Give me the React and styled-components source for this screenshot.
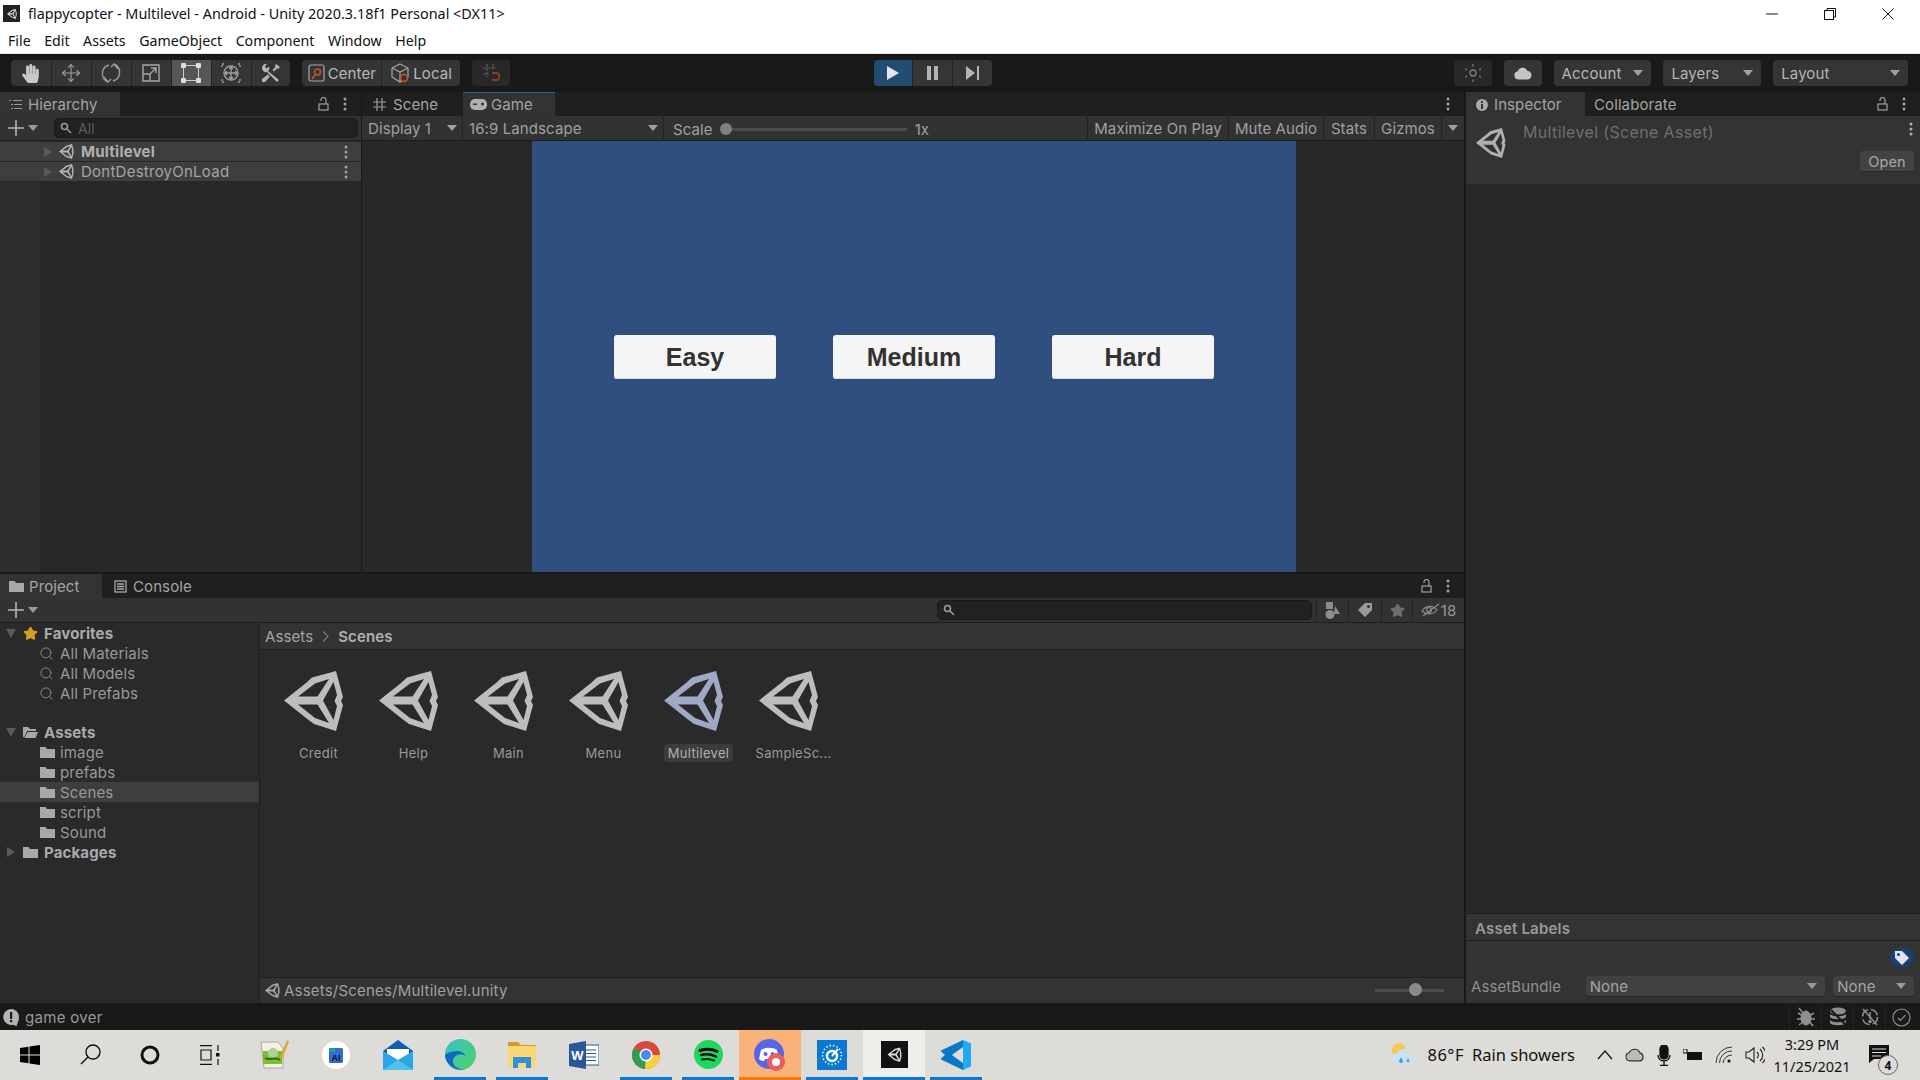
import styled, { createGlobalStyle } from "styled-components";
import { Search, Star, Move } from "lucide-react";
import { FaHandPaper } from "react-icons/fa";

const Global = createGlobalStyle`
html, body { margin: 0; padding: 0; background: #191919; overflow: hidden; }
* { box-sizing: border-box; }
`;

const Page = styled.div`
width: 1920px;
height: 1080px;
display: flex;
flex-direction: column;
font-family: Inter, "Liberation Sans", sans-serif;
font-size: 15px;
letter-spacing: 0.1px;
color: #a4a4a4;
overflow: hidden;
`;

/* window chrome */
const TitleBar = styled.div`
height: 27px;
background: #fff;
display: flex;
align-items: center;
padding-left: 3px;
font-family: "Noto Sans", sans-serif;
font-size: 14.4px;
letter-spacing: 0;
color: #111;
`;

const AppIcon = styled.div`
width: 17px;
height: 17px;
background: #222;
color: #ddd;
display: flex;
align-items: center;
justify-content: center;
margin-right: 8px;
`;

const WinButtons = styled.div`
margin-left: auto;
display: flex;
align-items: center;
padding-right: 26px;
gap: 46px;
`;

const MenuBar = styled.div`
height: 27px;
background: #fff;
border-bottom: 1px solid #e4e4e4;
display: flex;
align-items: center;
padding: 0 0 0 8px;
gap: 13.5px;
font-family: "Noto Sans", sans-serif;
font-size: 14.2px;
letter-spacing: 0;
color: #111;
`;

/* main toolbar */
const Toolbar = styled.div`
height: 38px;
background: #191919;
display: flex;
align-items: center;
padding: 0 12px 0 11px;
`;

const ToolGroup = styled.div`
display: flex;
height: 26px;
border-radius: 4px;
overflow: hidden;
margin-left: ${p => p.$gap || 0}px;
`;

const ToolBtn = styled.div`
width: ${p => p.$w || 40}px;
height: 26px;
background: ${p => (p.$on ? "#565656" : p.$play ? "#234c73" : p.$dim ? "#282828" : "#353535")};
border-left: ${p => (p.$first ? "none" : "1px solid #232323")};
color: ${p => (p.$dim ? "#777" : "#b8b8b8")};
display: flex;
align-items: center;
justify-content: center;
gap: 3px;
font-size: 15px;
`;

const ToolDrop = styled.div`
width: ${p => p.$w}px;
height: 26px;
margin-left: 12px;
border-radius: 4px;
background: #353535;
color: #b4b4b4;
display: flex;
align-items: center;
justify-content: space-between;
padding: 0 8px;
font-size: 15px;
`;

const Caret = styled.span`
display: inline-block;
width: 0;
height: 0;
border-left: 5px solid transparent;
border-right: 5px solid transparent;
border-top: 6px solid ${p => p.$c || "#a0a0a0"};
flex: none;
`;

const SideCaret = styled.span`
display: inline-block;
width: 0;
height: 0;
border-top: 5px solid transparent;
border-bottom: 5px solid transparent;
border-left: 8px solid #5a5a5a;
flex: none;
`;

const DownCaret = styled.span`
display: inline-block;
width: 0;
height: 0;
border-left: 5px solid transparent;
border-right: 5px solid transparent;
border-top: 9px solid #5a5a5a;
flex: none;
`;

/* editor layout */
const Editor = styled.div`
height: 911px;
display: flex;
gap: 2px;
background: #191919;
`;

const LeftCol = styled.div`
width: 1464px;
display: flex;
flex-direction: column;
gap: 2px;
`;

const TopRow = styled.div`
height: 480px;
display: flex;
gap: 1px;
`;

const Panel = styled.div`
display: flex;
flex-direction: column;
flex: ${p => (p.$w ? "none" : 1)};
width: ${p => (p.$w ? p.$w + "px" : "auto")};
min-width: 0;
background: #282828;
`;

const TabBar = styled.div`
height: 24px;
flex: none;
background: #1f1f1f;
display: flex;
align-items: stretch;
`;

const Tab = styled.div`
width: ${p => p.$w}px;
background: ${p => (p.$on ? "#333" : "transparent")};
border-top: 1px solid ${p => (p.$blue ? "#2c5d87" : "transparent")};
display: flex;
align-items: center;
gap: ${p => p.$gap || 6}px;
padding-left: ${p => p.$pad || 9}px;
font-size: 15px;
color: #a4a4a4;
`;

const TabTools = styled.div`
margin-left: auto;
display: flex;
align-items: center;
gap: 14px;
padding-right: 14px;
color: #a0a0a0;
`;

const SubBar = styled.div`
height: 25px;
flex: none;
background: #323232;
border-bottom: 1px solid #1d1d1d;
display: flex;
align-items: center;
`;

const AddBtn = styled.div`
width: 48px;
height: 100%;
display: flex;
align-items: center;
padding-left: 8px;
gap: 4px;
color: #b0b0b0;
`;

const SearchBox = styled.div`
height: 20px;
width: ${p => p.$w}px;
margin-left: ${p => p.$ml || 0}px;
background: #212121;
border: 1px solid #1a1a1a;
border-radius: 5px;
display: flex;
align-items: center;
gap: 6px;
padding-left: 5px;
font-size: 14px;
color: #5c5c5c;
`;

const HierarchyList = styled.div`
flex: 1;
padding-top: 1px;
background: linear-gradient(to right, #2e2e2e 40px, #282828 40px);
`;

const HierarchyRow = styled.div`
height: 20px;
background: #3e3e3e;
border-bottom: 1px solid #262626;
display: flex;
align-items: center;
padding: 0 13px 0 44px;
gap: 7px;
font-weight: ${p => (p.$bold ? 700 : 400)};
color: ${p => (p.$bold ? "#b0b0b0" : "#a4a4a4")};
font-size: 15px;
letter-spacing: 0.25px;
`;

const RowDots = styled.div`
margin-left: auto;
display: flex;
color: #a0a0a0;
`;

/* game view */
const GameTools = styled(SubBar)`
font-size: 15px;
color: #a0a0a0;
`;

const GameCell = styled.div`
width: ${p => p.$w}px;
height: 100%;
flex: ${p => (p.$grow ? 1 : "none")};
border-right: ${p => (p.$last ? "none" : "1px solid #232323")};
display: flex;
align-items: center;
justify-content: ${p => (p.$center ? "center" : "space-between")};
padding: ${p => (p.$center ? "0" : "0 5px 0 6px")};
`;

const ScaleCell = styled(GameCell)`
justify-content: flex-start;
padding: 2px 0 0 9px;
`;

const ScaleTrack = styled.div`
width: 181px;
height: 3px;
background: #4c4c4c;
margin: 0 8px 0 13px;
position: relative;
`;

const ScaleKnob = styled.div`
position: absolute;
left: -6px;
top: -5px;
width: 12px;
height: 12px;
border-radius: 50%;
background: #808080;
`;

const GameArea = styled.div`
flex: 1;
display: flex;
background: #282828;
padding-left: 170px;
`;

const GameScreen = styled.div`
width: 764px;
background: #2f4f7e;
display: flex;
align-items: center;
justify-content: center;
gap: 57px;
`;

const GameButton = styled.div`
width: 162px;
height: 44px;
padding-top: 2px;
background: #f5f5f5;
border-radius: 3px;
display: flex;
align-items: center;
justify-content: center;
font-family: "Liberation Sans", sans-serif;
font-weight: 700;
font-size: 25px;
letter-spacing: 0;
color: #323232;
box-shadow: inset 0 -1px 0 #d8d8d8;
`;

/* project */
const ProjectBody = styled.div`
flex: 1;
display: flex;
min-height: 0;
background: #2a2a2a;
`;

const Tree = styled.div`
width: 260px;
flex: none;
border-right: 1px solid #1e1e1e;
`;

const TreeRow = styled.div`
height: 20px;
display: flex;
align-items: center;
padding-left: ${p => p.$pad}px;
margin-top: ${p => p.$mt || 0}px;
gap: ${p => p.$gap || 6}px;
background: ${p => (p.$on ? "#3e3e3e" : "transparent")};
font-weight: ${p => (p.$bold ? 700 : 400)};
font-size: 15px;
letter-spacing: 0.15px;
color: ${p => (p.$bold ? "#aaa" : "#999")};
`;

const ArrowSlot = styled.span`
width: 11px;
display: flex;
justify-content: center;
flex: none;
`;

const TreeIcon = styled.span`
display: flex;
margin-left: 1px;
`;

const Browser = styled.div`
flex: 1;
display: flex;
flex-direction: column;
min-width: 0;
`;

const Crumbs = styled.div`
height: 27px;
flex: none;
background: #333;
border-bottom: 1px solid #1f1f1f;
display: flex;
align-items: center;
padding-left: 5px;
gap: 9px;
font-size: 15px;
`;

const CrumbBold = styled.span`
font-weight: 600;
color: #b0b0b0;
`;

const AssetGrid = styled.div`
flex: 1;
display: flex;
padding: 21px 0 0 11px;
align-items: flex-start;
`;

const AssetCell = styled.div`
width: 95px;
display: flex;
flex-direction: column;
align-items: center;
gap: 13px;
color: ${p => (p.$on ? "#9fa9c4" : "#bdbdbd")};
`;

const AssetIcon = styled.div`
display: flex;
padding-right: 10px;
`;

const AssetName = styled.div`
height: 18px;
padding: 0 4px;
border-radius: 4px;
background: ${p => (p.$on ? "#3c3c3c" : "transparent")};
color: ${p => (p.$on ? "#b0b0b0" : "#999")};
font-size: 13px;
letter-spacing: 0.3px;
display: flex;
align-items: center;
white-space: nowrap;
`;

const ProjectFooter = styled.div`
height: 26px;
flex: none;
background: #333;
border-top: 1px solid #1f1f1f;
display: flex;
align-items: center;
padding-left: 5px;
gap: 4px;
font-size: 15px;
letter-spacing: 0.2px;
color: #a0a0a0;
`;

const FooterSlider = styled.div`
margin-left: auto;
margin-right: 20px;
width: 69px;
height: 3px;
background: #4c4c4c;
position: relative;
`;

const FooterKnob = styled.div`
position: absolute;
left: 34px;
top: -6px;
width: 13px;
height: 13px;
border-radius: 50%;
background: #8a8a8a;
`;

const FilterBtn = styled.div`
width: ${p => p.$w || 32}px;
height: 100%;
margin-left: ${p => p.$ml || 0}px;
border-left: 1px solid #232323;
display: flex;
align-items: center;
justify-content: center;
gap: 1px;
color: #999;
font-size: 15px;
`;

/* inspector */
const InspectorHead = styled.div`
height: 68px;
flex: none;
background: #333;
padding: 5px 6px 0 10px;
display: grid;
grid-template-columns: 47px 1fr auto;
grid-template-rows: 23px 32px;
color: #b0b0b0;
`;

const InspectorLogo = styled.div`
grid-row: 1 / 3;
padding-top: 7px;
`;

const InspectorTitle = styled.div`
font-size: 16px;
color: #6f6f6f;
line-height: 22px;
letter-spacing: 0.35px;
`;

const OpenBtn = styled.div`
grid-column: 3;
grid-row: 2;
align-self: center;
justify-self: end;
width: 54px;
height: 21px;
margin-top: 3px;
border-radius: 3px;
background: #434343;
border-bottom: 1px solid #252525;
display: flex;
align-items: center;
justify-content: center;
font-size: 14.5px;
color: #a8a8a8;
`;

const HeadDots = styled.div`
justify-self: end;
padding-right: 1px;
`;

const InspectorFill = styled.div`
flex: 1;
`;

const LabelsHead = styled.div`
height: 28px;
flex: none;
background: #333;
border-top: 1px solid #1f1f1f;
border-bottom: 1px solid #1f1f1f;
display: flex;
align-items: center;
padding: 2px 0 0 9px;
font-weight: 600;
font-size: 15px;
letter-spacing: 0.2px;
color: #999;
`;

const LabelsBody = styled.div`
height: 62px;
flex: none;
background: #333;
display: flex;
flex-direction: column;
padding: 7px 6px 0 5px;
`;

const TagPill = styled.div`
align-self: flex-end;
width: 24px;
height: 19px;
border-radius: 10px;
background: #1d3f6e;
display: flex;
align-items: center;
justify-content: center;
`;

const BundleRow = styled.div`
margin-top: 9px;
display: flex;
align-items: center;
font-size: 15px;
color: #909090;
`;

const BundleLabel = styled.span`
width: 115px;
`;

const Select = styled.div`
height: 21px;
width: ${p => p.$w}px;
margin-left: ${p => p.$ml || 0}px;
background: #414141;
border-radius: 4px;
border-bottom: 1px solid #232323;
display: flex;
align-items: center;
justify-content: space-between;
padding: 0 8px 0 4px;
color: #a4a4a4;
`;

/* status bar */
const StatusBar = styled.div`
height: 27px;
background: #191919;
display: flex;
align-items: center;
padding: 1px 3px 0 3px;
gap: 6px;
font-size: 15px;
letter-spacing: 0.3px;
color: #999;
`;

const StatusIcons = styled.div`
margin-left: auto;
display: flex;
height: 100%;
`;

const StatusIcon = styled.div`
width: 32px;
border-left: 1px solid #232323;
display: flex;
align-items: center;
justify-content: center;
color: #8f8f8f;
`;

/* taskbar */
const Taskbar = styled.div`
height: 50px;
background: #dedcd8;
display: flex;
align-items: stretch;
font-family: "Noto Sans", sans-serif;
letter-spacing: 0;
color: #111;
`;

const SysSlot = styled.div`
width: 60px;
display: flex;
align-items: center;
justify-content: center;
padding-bottom: 1px;
`;

const AppsGroup = styled.div`
display: flex;
margin-left: 3px;
`;

const AppSlot = styled.div`
width: 62px;
display: flex;
align-items: center;
justify-content: center;
padding-bottom: 1px;
position: relative;
background: ${p => (p.$orange ? "#f8b27a" : p.$on ? "#f0eeeb" : "transparent")};
&::after {
  content: "";
  display: ${p => (p.$line ? "block" : "none")};
  position: absolute;
  left: ${p => (p.$wide ? 0 : 5)}px;
  right: ${p => (p.$wide ? 0 : 5)}px;
  bottom: 0;
  height: 3px;
  background: ${p => (p.$orange ? "#fb7a0f" : "#0a78d4")};
}
`;

const Tray = styled.div`
margin-left: auto;
display: flex;
align-items: center;
padding-right: 23px;
`;

const Weather = styled.div`
display: flex;
align-items: center;
gap: 11px;
font-size: 16.5px;
padding-bottom: 1px;
margin-right: 22px;
`;

const WeatherText = styled.span`
display: flex;
gap: 8px;
white-space: nowrap;
`;

const Temp = styled.span`
letter-spacing: 0.5px;
`;

const TrayIcons = styled.div`
display: flex;
align-items: center;
gap: 12px;
margin-right: 5px;
`;

const Clock = styled.div`
width: 84px;
text-align: center;
font-size: 14.5px;
line-height: 22px;
`;

const Notify = styled.div`
margin-left: 15px;
width: 28px;
height: 40px;
padding-top: 10px;
position: relative;
`;

const NotifyBadge = styled.div`
position: absolute;
right: -1px;
bottom: 0;
width: 20px;
height: 20px;
border-radius: 50%;
border: 1px solid #666;
background: #dedcd8;
display: flex;
align-items: center;
justify-content: center;
font-weight: 700;
font-size: 12px;
`;

const UNITY =
  "M0 29.500 22 12 28 6.500 52 0 59 26 57 30 59 34 52 60 30 53 22 47Z" +
  "M14 25.500H33.500L45 8 31 12.500ZM49.500 11 39 29.500 49.500 49 53 35 50.500 30 53 24ZM14 33.500 31 47 45 52 33.500 33.500Z";

function UnityLogo({ size = 60, color = "currentColor" }) {
  return (
    <svg width={size} height={size} viewBox="0 0 60 60">
      <path d={UNITY} fill={color} fillRule="evenodd" />
    </svg>
  );
}

function Dots() {
  return (
    <svg width="4" height="14" viewBox="0 0 4 14" fill="currentColor">
      <circle cx="2" cy="2" r="1.5" />
      <circle cx="2" cy="7" r="1.5" />
      <circle cx="2" cy="12" r="1.5" />
    </svg>
  );
}

function Lock() {
  return (
    <svg width="11" height="14" viewBox="0 0 11 14" fill="none" stroke="currentColor" strokeWidth="1.2">
      <rect x="1" y="7" width="9" height="6" />
      <path d="M3 4V3a2.4 2.4 0 0 1 5 0v4" />
    </svg>
  );
}

function Folder({ open }) {
  return (
    <svg width="15" height="13" viewBox="0 0 15 13" fill="#a8a8a8">
      {open ? (
        <path d="M0 1h5l2 2h6v2H4L1.500 11H0ZM4.500 6H15l-2.500 6H1.500Z" />
      ) : (
        <path d="M0 1h5.500l1.500 2h8v9H0Z" />
      )}
    </svg>
  );
}

function TagIcon({ size = 14, color = "#999", hole = "#323232", flip }) {
  return (
    <svg width={size} height={size} viewBox="0 0 14 14">
      <g transform={flip ? "translate(14 0) scale(-1 1)" : undefined}>
        <path d="M7 0h7v7l-7 7-7-7Z" fill={color} />
        <circle cx="10.500" cy="3.500" r="1.500" fill={hole} />
      </g>
    </svg>
  );
}

function SmallSearch() {
  return <Search size={15} color="#8a8a8a" strokeWidth={1.5} />;
}

function MiniSearch() {
  return (
    <svg width="12" height="12" viewBox="0 0 12 12" fill="none" stroke="#999" strokeWidth="1.6">
      <circle cx="4.500" cy="4.500" r="3" />
      <path d="M7 7l4 4" />
    </svg>
  );
}

function RotateIcon() {
  return (
    <svg width="22" height="22" viewBox="0 0 22 22" fill="none" stroke="#9a9a9a" strokeWidth="1.4">
      <path d="M8 20A9 9 0 0 1 9 3M14 2a9 9 0 0 1-1 17" />
      <path d="M4 15l4 5 3-3M18 7l-4-5-3 3" />
    </svg>
  );
}

function ScaleIcon() {
  return (
    <svg width="18" height="18" viewBox="0 0 18 18" fill="none" stroke="#a8a8a8" strokeWidth="1.4">
      <path d="M1 1h16v16H1ZM1 10h7v7M8 10l6-6M9 4h5v5" />
    </svg>
  );
}

function RectIcon() {
  return (
    <svg width="20" height="20" viewBox="0 0 20 20" fill="none" stroke="#ccc" strokeWidth="1">
      <rect x="2.500" y="2.500" width="15" height="15" />
      <g fill="#ddd" stroke="none">
        <rect x="0" y="0" width="5" height="5" rx="1" />
        <rect x="15" y="0" width="5" height="5" rx="1" />
        <rect x="0" y="15" width="5" height="5" rx="1" />
        <rect x="15" y="15" width="5" height="5" rx="1" />
      </g>
    </svg>
  );
}

function TransformIcon() {
  return (
    <svg width="20" height="20" viewBox="0 0 20 20" fill="none" stroke="#a0a0a0" strokeWidth="1.3">
      <circle cx="10" cy="10" r="7" />
      <path d="M10 4v12M4 10h12M8 6l2-2 2 2M8 14l2 2 2-2M6 8l-2 2 2 2M14 8l2 2-2 2" />
      <path d="M1 4V1h3M19 4V1h-3M1 16v3h3M19 16v3h-3" strokeDasharray="2 1" />
    </svg>
  );
}

function ToolsIcon() {
  return (
    <svg width="20" height="20" viewBox="0 0 20 20" fill="#b4b4b4">
      <path d="M1 5a4 4 0 0 1 5-4L4 3.500 5.500 5.500 8 3.500a4 4 0 0 1-1 4.500L18 17l-2 2-10-10A4 4 0 0 1 1 5Z" />
      <path d="M15 1l4 3-2 2-1-.500-3 3-1.500-1.500 3-3-.500-1ZM7 11.500 9 13.500 4 19H1v-3Z" />
    </svg>
  );
}

function CenterIcon() {
  return (
    <svg width="17" height="18" viewBox="0 0 17 18" fill="none" stroke="#a8a8a8" strokeWidth="1.2">
      <rect x="1" y="1" width="15" height="16" rx="2" />
      <circle cx="9.500" cy="8" r="3" stroke="#c8542f" strokeWidth="1.5" />
      <path d="M7 11l-3 4" stroke="#c8542f" strokeWidth="1.5" />
    </svg>
  );
}

function LocalIcon() {
  return (
    <svg width="20" height="20" viewBox="0 0 20 20" fill="none" stroke="#a8a8a8" strokeWidth="1.2">
      <path d="M10 1l8 4v9l-8 5-8-5V5ZM2 5l8 4 8-4M10 9v10" />
      <circle cx="14" cy="15" r="3.500" fill="#353535" stroke="#c8542f" strokeWidth="1.6" />
    </svg>
  );
}

function SnapIcon() {
  return (
    <svg width="18" height="20" viewBox="0 0 18 20" fill="none" stroke="#5e5e5e" strokeWidth="1.2">
      <path d="M5 1v13M11 1v5M1 5h13M1 11h6" strokeDasharray="3 1" />
      <path d="M10 10h4a3.500 3.500 0 0 1 0 7h-4" stroke="#8a3f28" strokeWidth="2" />
    </svg>
  );
}

function GridIcon() {
  return (
    <svg width="13" height="13" viewBox="0 0 13 13" fill="none" stroke="#9c9c9c" strokeWidth="1.2">
      <path d="M4 0v13M9 0v13M0 4h13M0 9h13" />
    </svg>
  );
}

function GamepadIcon() {
  return (
    <svg width="17" height="11" viewBox="0 0 17 11" fill="#b0b0b0">
      <rect x="0" y="0" width="17" height="11" rx="5" />
      <rect x="3" y="4.500" width="4" height="1.500" fill="#333" />
      <circle cx="12.500" cy="5" r="1.500" fill="#333" />
    </svg>
  );
}

function ListIcon() {
  return (
    <svg width="13" height="11" viewBox="0 0 13 11" fill="none" stroke="#999" strokeWidth="1.100">
      <path d="M0 1.500h2M4 1.500h9M2 5.500h2M5 5.500h8M2 9.500h2M5 9.500h8" />
    </svg>
  );
}

function ConsoleIcon() {
  return (
    <svg width="13" height="13" viewBox="0 0 13 13" fill="none" stroke="#aaa" strokeWidth="1.300">
      <rect x="1" y="1" width="11" height="11" />
      <path d="M3 4h7M3 6.500h7M3 9h7" />
    </svg>
  );
}

function SunIcon() {
  return (
    <svg width="16" height="18" viewBox="0 0 16 18" fill="none" stroke="#808080" strokeWidth="1.300">
      <circle cx="8" cy="9" r="3" />
      <path d="M8 0v2.500M8 15.500V18M0 5l2 1M14 12l2 1M0 13l2-1M14 6l2-1" />
    </svg>
  );
}

function CloudIcon({ size = 18, color = "#c4c4c4" }) {
  return (
    <svg width={size} height={size * 0.75} viewBox="0 0 24 18" fill={color}>
      <path d="M6 18a5.500 5.500 0 0 1-1-10.900A7 7 0 0 1 18 6.500 5.800 5.800 0 0 1 18.500 18Z" />
    </svg>
  );
}

function InfoDot() {
  return (
    <svg width="12" height="12" viewBox="0 0 12 12">
      <circle cx="6" cy="6" r="6" fill="#aaa" />
      <rect x="5" y="5" width="2" height="5" fill="#333" />
      <rect x="5" y="2" width="2" height="2" fill="#333" />
    </svg>
  );
}

function Bubble() {
  return (
    <svg width="16" height="17" viewBox="0 0 16 17">
      <path d="M8 0a8 8 0 0 1 8 8c0 5-3 8-2 9-2 0-3-1-4-1.200A8 8 0 1 1 8 0Z" fill="#b4b4b4" />
      <rect x="7" y="3" width="2.200" height="7" fill="#191919" />
      <rect x="7" y="11" width="2.200" height="2.200" fill="#191919" />
    </svg>
  );
}

function FilterShapes() {
  return (
    <svg width="15" height="17" viewBox="0 0 15 17" fill="#8c8c8c">
      <rect x="1" y="0" width="7" height="7" />
      <circle cx="5" cy="12.500" r="4.500" />
      <path d="M10 4l5 8h-6Z" />
    </svg>
  );
}

function EyeSlash() {
  return (
    <svg width="19" height="14" viewBox="0 0 19 14" fill="none" stroke="#8c8c8c" strokeWidth="1.200">
      <path d="M1 8c4-6 11-6 15-1-4 5-11 5-15 1Z" />
      <circle cx="8" cy="7" r="2.500" />
      <path d="M2 13 18 1" />
    </svg>
  );
}

function BugIcon() {
  return (
    <svg width="18" height="20" viewBox="0 0 18 20" fill="#8f8f8f" stroke="#8f8f8f">
      <ellipse cx="9" cy="11" rx="5" ry="7" />
      <path d="M1 6l5 3M17 6l-5 3M0 12h4M18 12h-4M2 18l4-3M16 18l-4-3M2 1l14 18" fill="none" strokeWidth="1.500" />
    </svg>
  );
}

function DbIcon() {
  return (
    <svg width="18" height="20" viewBox="0 0 18 20" fill="#8f8f8f">
      <ellipse cx="9" cy="4" rx="8" ry="3.500" />
      <path d="M1 7c2 3 14 3 16 0v3c-2 3-14 3-16 0ZM1 13c2 3 14 3 16 0v3c-2 3-14 3-16 0Z" />
      <path d="M2 3l15 15" stroke="#191919" strokeWidth="2" />
    </svg>
  );
}

function SyncOffIcon() {
  return (
    <svg width="20" height="20" viewBox="0 0 20 20" fill="none" stroke="#8f8f8f" strokeWidth="1.500">
      <circle cx="10" cy="10" r="7.500" strokeDasharray="9 3" />
      <path d="M10 5v7M3 2l14 16" />
      <circle cx="10" cy="14.500" r="1" fill="#8f8f8f" />
    </svg>
  );
}

function CheckIcon() {
  return (
    <svg width="19" height="19" viewBox="0 0 19 19" fill="none" stroke="#8f8f8f" strokeWidth="1.200">
      <circle cx="9.500" cy="9.500" r="8.500" />
      <path d="M6 10l2.500 2.500L13.500 7" />
    </svg>
  );
}

/* taskbar pictures */
function WinLogo() {
  return (
    <svg width="20" height="20" viewBox="0 0 20 20" fill="#000">
      <path d="M0 3l8.500-1.200V9.500H0ZM9.500 1.600 20 0v9.500H9.500ZM0 10.500h8.500v7.700L0 17ZM9.500 10.500H20V20L9.500 18.400Z" />
    </svg>
  );
}

function SearchGlass() {
  return (
    <svg width="21" height="21" viewBox="0 0 21 21" fill="none" stroke="#111" strokeWidth="1.400">
      <circle cx="13" cy="8" r="7" />
      <path d="M8 13l-7 7" />
    </svg>
  );
}

function CortanaRing() {
  return (
    <svg width="20" height="20" viewBox="0 0 20 20" fill="none" stroke="#111" strokeWidth="3">
      <circle cx="10" cy="10" r="8" />
    </svg>
  );
}

function TaskView() {
  return (
    <svg width="20" height="20" viewBox="0 0 20 20" fill="none" stroke="#111" strokeWidth="1.200">
      <path d="M0 .6h12M0 19.400h12M1 5h10v10H1ZM18 0v6M18 14v6" />
      <rect x="16" y="8" width="3.500" height="3.500" fill="#111" stroke="none" />
    </svg>
  );
}

function NotepadIcon() {
  return (
    <svg width="30" height="30" viewBox="0 0 30 30">
      <path d="M2 2h17l5 6v20H5Z" fill="#f2f2e4" stroke="#a8a89a" />
      <rect x="4" y="11" width="19" height="13" fill="#79c12c" />
      <circle cx="14" cy="13" r="5" fill="#b4ce9a" />
      <path d="M6 18c4 3 10-2 15 2" stroke="#2c6b12" strokeWidth="2" fill="none" />
      <path d="M22 18 29 1" stroke="#e0a72e" strokeWidth="2.500" />
    </svg>
  );
}

function CircleApp() {
  return (
    <svg width="28" height="28" viewBox="0 0 28 28">
      <circle cx="14" cy="14" r="14" fill="#fff" />
      <rect x="7" y="7" width="14" height="15" rx="1.500" fill="#2f6fd4" />
      <rect x="7" y="7" width="6" height="4" fill="#2a9d8f" />
      <text x="14" y="20" fontSize="9" fontWeight="700" textAnchor="middle" fill="#111" fontFamily="Liberation Sans">AI</text>
    </svg>
  );
}

function MailIcon() {
  return (
    <svg width="30" height="30" viewBox="0 0 30 30">
      <path d="M0 11 15 0l15 11v19H0Z" fill="#0f5fae" />
      <path d="M4 9h22v6l-11 6-11-6Z" fill="#fff" />
      <path d="M0 11l15 9 15-9v19H0Z" fill="#2aa6e8" />
      <path d="M0 30l15-10 15 10Z" fill="#4fc0f0" />
    </svg>
  );
}

function EdgeIcon() {
  return (
    <svg width="31" height="31" viewBox="0 0 31 31">
      <defs>
        <linearGradient id="edgeG" x1="0" y1="0" x2="1" y2="1">
          <stop offset="0" stopColor="#35c1c4" />
          <stop offset="1" stopColor="#52d26a" />
        </linearGradient>
      </defs>
      <circle cx="15.500" cy="15.500" r="15.500" fill="url(#edgeG)" />
      <path d="M0 15.500A15.500 15.500 0 0 0 20 30c-6 1-13-3-12-9 1-5 8-7 12-4 0-3-4-5-8-5-6 0-11 3-12 3.500Z" fill="#0d6cc2" />
    </svg>
  );
}

function ExplorerIcon() {
  return (
    <svg width="28" height="26" viewBox="0 0 28 26">
      <path d="M0 0h10l3 3h15v4H0Z" fill="#d99a20" />
      <rect x="0" y="4" width="28" height="22" fill="#f8d775" />
      <path d="M5 26V15h18v11h-5v-5h-8v5Z" fill="#2f8fd8" />
    </svg>
  );
}

function WordIcon() {
  return (
    <svg width="30" height="28" viewBox="0 0 30 28">
      <rect x="13" y="4" width="17" height="20" fill="#fff" stroke="#2b579a" />
      <path d="M16 9h11M16 12.500h11M16 16h11M16 19.500h11" stroke="#2b579a" />
      <path d="M0 3 17 0v28L0 25Z" fill="#2b579a" />
      <text x="8.500" y="19" fontSize="13" fontWeight="700" textAnchor="middle" fill="#fff" fontFamily="Liberation Sans">W</text>
    </svg>
  );
}

function ChromeIcon() {
  return (
    <svg width="28" height="28" viewBox="0 0 28 28">
      <circle cx="14" cy="14" r="14" fill="#d94a3d" />
      <path d="M14 14 2 7A14 14 0 0 0 14 28Z" fill="#2f9e55" />
      <path d="M14 14h14A14 14 0 0 1 14 28l-1-1Z" fill="#fccf3e" />
      <circle cx="14" cy="14" r="6.500" fill="#fff" />
      <circle cx="14" cy="14" r="5" fill="#4a8bf0" />
    </svg>
  );
}

function SpotifyIcon() {
  return (
    <svg width="29" height="29" viewBox="0 0 29 29" fill="none">
      <circle cx="14.500" cy="14.500" r="14.500" fill="#1ed760" />
      <g stroke="#111" strokeLinecap="round">
        <path d="M6 10.500c6-2 12-1.500 17 1" strokeWidth="3" />
        <path d="M7 15c5-1.500 10-1 15 1.500" strokeWidth="2.500" />
        <path d="M8 19.500c4-1 8-.7 12 1" strokeWidth="2" />
      </g>
    </svg>
  );
}

function DiscordIcon() {
  return (
    <svg width="32" height="32" viewBox="0 0 32 32">
      <circle cx="15" cy="15" r="15" fill="#5865e8" />
      <path d="M7 11c4-3 12-3 16 0l2 9c-2 2-4 2-5 2l-1-2H11l-1 2c-1 0-3 0-5-2Z" fill="#fff" />
      <circle cx="11.500" cy="15" r="2" fill="#5865e8" />
      <circle cx="18.500" cy="15" r="2" fill="#5865e8" />
      <circle cx="22" cy="23" r="9" fill="#ee5d5d" />
      <circle cx="22" cy="23" r="4" fill="#fff" />
    </svg>
  );
}

function GaugeIcon() {
  return (
    <svg width="30" height="30" viewBox="0 0 30 30" fill="none">
      <rect width="30" height="30" fill="#0a78d4" />
      <circle cx="15" cy="15" r="9.500" stroke="#fff" strokeWidth="1.500" strokeDasharray="1.500 2" />
      <circle cx="15" cy="16" r="5" stroke="#fff" strokeWidth="2.500" />
      <path d="M15 16l6-7" stroke="#fff" strokeWidth="2" />
    </svg>
  );
}

function UnityApp() {
  return (
    <svg width="27" height="27" viewBox="0 0 27 27">
      <rect width="27" height="27" fill="#111" />
      <g transform="translate(6.500 6.500) scale(0.24)">
        <path d={UNITY} fill="#ddd" fillRule="evenodd" />
      </g>
    </svg>
  );
}

function VsCodeIcon() {
  return (
    <svg width="30" height="30" viewBox="0 0 30 30">
      <path d="M22 0 30 3.500v23L22 30 9 17.500V12.500Z" fill="#23a8f2" />
      <path d="M22 0v7L11 15l11 8v7L0 19.500v-1L4 15 0 11.500v-1Z" fill="#0a78c4" />
      <path d="M22 7v16l-11-8Z" fill="#dedcd8" />
    </svg>
  );
}

function WeatherIcon() {
  return (
    <svg width="26" height="24" viewBox="0 0 26 24">
      <circle cx="9" cy="7" r="7" fill="#f5c94a" />
      <path d="M7 20a5 5 0 0 1 0-10 7 7 0 0 1 13 1 4.500 4.500 0 0 1 0 9Z" fill="#c9e1f3" />
      <path d="M11 14l-2 4a2 2 0 0 0 4 0ZM18 15l-1.500 3a1.700 1.700 0 0 0 3 0Z" fill="#3f9fe0" />
    </svg>
  );
}

function TrayCloud() {
  return (
    <svg width="20" height="14" viewBox="0 0 24 16">
      <path d="M6 15a5 5 0 0 1-.8-9.900A7 7 0 0 1 18 5.500 5 5 0 0 1 18.500 15Z" fill="#bbb" stroke="#333" strokeWidth="1.400" />
    </svg>
  );
}

function MicIcon() {
  return (
    <svg width="14" height="21" viewBox="0 0 14 21" fill="none" stroke="#111" strokeWidth="1.300">
      <rect x="3" y="0" width="8" height="14" rx="4" fill="#111" />
      <path d="M1 10a6 6 0 0 0 12 0M7 16v4M3 20.500h8" />
    </svg>
  );
}

function BatteryIcon() {
  return (
    <svg width="20" height="12" viewBox="0 0 20 12" fill="#111">
      <path d="M4 3h15v8H4Z" />
      <rect x="0" y="0" width="4" height="4" fill="none" stroke="#111" />
    </svg>
  );
}

function WifiIcon() {
  return (
    <svg width="18" height="18" viewBox="0 0 18 18" fill="none" stroke="#333" strokeWidth="1">
      <path d="M1 17A16 16 0 0 1 17 1M4.500 17A12 12 0 0 1 17 5M8 17A9 9 0 0 1 17 9" />
      <circle cx="14" cy="15" r="1.600" fill="#111" stroke="none" />
    </svg>
  );
}

function VolumeIcon() {
  return (
    <svg width="20" height="18" viewBox="0 0 20 18" fill="none" stroke="#222" strokeWidth="1.100">
      <path d="M1 6h3l5-4v14l-5-4H1ZM12 6a4 4 0 0 1 0 6M15 3a8 8 0 0 1 0 12M17.500 1a11 11 0 0 1 0 16" />
    </svg>
  );
}

function NotifyIcon() {
  return (
    <svg width="20" height="18" viewBox="0 0 20 18" fill="#111">
      <path d="M0 0h20v14H5l-5 4Z" />
      <path d="M3 4h14M3 7.500h14M3 11h9" stroke="#dedcd8" />
    </svg>
  );
}

const scenes = ["Credit", "Help", "Main", "Menu", "Multilevel", "SampleSc..."];
const favorites = ["All Materials", "All Models", "All Prefabs"];
const folders = ["image", "prefabs", "Scenes", "script", "Sound"];
const menus = ["File", "Edit", "Assets", "GameObject", "Component", "Window", "Help"];
const taskApps = [
  { icon: <NotepadIcon /> },
  { icon: <CircleApp /> },
  { icon: <MailIcon /> },
  { icon: <EdgeIcon />, line: true },
  { icon: <ExplorerIcon />, line: true },
  { icon: <WordIcon /> },
  { icon: <ChromeIcon />, line: true },
  { icon: <SpotifyIcon />, line: true },
  { icon: <DiscordIcon />, line: true, orange: true, wide: true },
  { icon: <GaugeIcon />, line: true },
  { icon: <UnityApp />, line: true, on: true, wide: true },
  { icon: <VsCodeIcon />, line: true },
];

export default function App() {
  return (
    <Page>
      <Global />
      <TitleBar>
        <AppIcon><UnityLogo size={10} /></AppIcon>
        flappycopter - Multilevel - Android - Unity 2020.3.18f1 Personal &lt;DX11&gt;
        <WinButtons>
          <svg width="12" height="12" viewBox="0 0 12 12" stroke="#111" fill="none"><path d="M0 6h12" /></svg>
          <svg width="12" height="12" viewBox="0 0 12 12" stroke="#111" fill="none"><rect x=".5" y="2.500" width="9" height="9" /><path d="M3 2.500V.5h8.500V9H9.500" /></svg>
          <svg width="12" height="12" viewBox="0 0 12 12" stroke="#111" fill="none"><path d="M.5.5l11 11M11.500.5l-11 11" /></svg>
        </WinButtons>
      </TitleBar>
      <MenuBar>
        {menus.map(m => <span key={m}>{m}</span>)}
      </MenuBar>

      <Toolbar>
        <ToolGroup>
          <ToolBtn $first><FaHandPaper size={19} color="#c8c8c8" /></ToolBtn>
          <ToolBtn><Move size={20} color="#a0a0a0" strokeWidth={1.3} /></ToolBtn>
          <ToolBtn><RotateIcon /></ToolBtn>
          <ToolBtn><ScaleIcon /></ToolBtn>
          <ToolBtn $on><RectIcon /></ToolBtn>
          <ToolBtn><TransformIcon /></ToolBtn>
          <ToolBtn><ToolsIcon /></ToolBtn>
        </ToolGroup>
        <ToolGroup $gap={12}>
          <ToolBtn $first $w={79}><CenterIcon />Center</ToolBtn>
          <ToolBtn $w={79}><LocalIcon />Local</ToolBtn>
        </ToolGroup>
        <ToolGroup $gap={12}>
          <ToolBtn $first $dim $w={38}><SnapIcon /></ToolBtn>
        </ToolGroup>
        <ToolGroup $gap={364}>
          <ToolBtn $first $play $w={38}>
            <svg width="12" height="14" viewBox="0 0 12 14" fill="#e6e6e6"><path d="M0 0l12 7-12 7Z" /></svg>
          </ToolBtn>
          <ToolBtn>
            <svg width="11" height="14" viewBox="0 0 11 14" fill="#b4b4b4"><rect width="4" height="14" /><rect x="7" width="4" height="14" /></svg>
          </ToolBtn>
          <ToolBtn>
            <svg width="13" height="14" viewBox="0 0 13 14" fill="#b4b4b4"><path d="M0 0l9 7-9 7ZM11 0h2v14h-2Z" /></svg>
          </ToolBtn>
        </ToolGroup>
        <ToolGroup $gap={462}>
          <ToolBtn $first $dim $w={38}><SunIcon /></ToolBtn>
        </ToolGroup>
        <ToolGroup $gap={12}>
          <ToolBtn $first $w={38}><CloudIcon /></ToolBtn>
        </ToolGroup>
        <ToolDrop $w={98}>Account<Caret /></ToolDrop>
        <ToolDrop $w={98}>Layers<Caret /></ToolDrop>
        <ToolDrop $w={135}>Layout<Caret /></ToolDrop>
      </Toolbar>

      <Editor>
        <LeftCol>
          <TopRow>
            <Panel $w={361}>
              <TabBar>
                <Tab $on $w={120}><ListIcon />Hierarchy</Tab>
                <TabTools><Lock /><Dots /></TabTools>
              </TabBar>
              <SubBar>
                <AddBtn>
                  <svg width="16" height="16" viewBox="0 0 16 16" stroke="#b4b4b4" strokeWidth="1.600"><path d="M8 0v16M0 8h16" /></svg>
                  <Caret $c="#999" />
                </AddBtn>
                <SearchBox $w={304} $ml={6}><MiniSearch />All</SearchBox>
              </SubBar>
              <HierarchyList>
                <HierarchyRow $bold><SideCaret /><UnityLogo size={15} color="#b4b4b4" />Multilevel<RowDots><Dots /></RowDots></HierarchyRow>
                <HierarchyRow><SideCaret /><UnityLogo size={15} color="#b4b4b4" />DontDestroyOnLoad<RowDots><Dots /></RowDots></HierarchyRow>
              </HierarchyList>
            </Panel>
            <Panel>
              <TabBar>
                <Tab $w={101} $pad={11} $gap={7}><GridIcon />Scene</Tab>
                <Tab $on $blue $w={92} $pad={7} $gap={4}><GamepadIcon />Game</Tab>
                <TabTools><Dots /></TabTools>
              </TabBar>
              <GameTools>
                <GameCell $w={101}>Display 1<Caret /></GameCell>
                <GameCell $w={201}>16:9 Landscape<Caret /></GameCell>
                <ScaleCell $w={424}>
                  Scale
                  <ScaleTrack><ScaleKnob /></ScaleTrack>
                  1x
                </ScaleCell>
                <GameCell $w={141} $center>Maximize On Play</GameCell>
                <GameCell $w={95} $center>Mute Audio</GameCell>
                <GameCell $w={51} $center>Stats</GameCell>
                <GameCell $w={67} $center>Gizmos</GameCell>
                <GameCell $grow $last $center><Caret /></GameCell>
              </GameTools>
              <GameArea>
                <GameScreen>
                  <GameButton>Easy</GameButton>
                  <GameButton>Medium</GameButton>
                  <GameButton>Hard</GameButton>
                </GameScreen>
              </GameArea>
            </Panel>
          </TopRow>

          <Panel>
            <TabBar>
              <Tab $on $w={102} $pad={9} $gap={5}><Folder />Project</Tab>
              <Tab $w={100} $pad={12} $gap={6}><ConsoleIcon />Console</Tab>
              <TabTools><Lock /><Dots /></TabTools>
            </TabBar>
            <SubBar>
              <AddBtn>
                <svg width="16" height="16" viewBox="0 0 16 16" stroke="#b4b4b4" strokeWidth="1.600"><path d="M8 0v16M0 8h16" /></svg>
                <Caret $c="#999" />
              </AddBtn>
              <SearchBox $w={375} $ml={889}><MiniSearch /></SearchBox>
              <FilterBtn $w={32} $ml={4}><FilterShapes /></FilterBtn>
              <FilterBtn $w={33}><TagIcon /></FilterBtn>
              <FilterBtn $w={31}><Star size={15} color="#6e6e6e" fill="#6e6e6e" /></FilterBtn>
              <FilterBtn $w={52}><EyeSlash />18</FilterBtn>
            </SubBar>
            <ProjectBody>
              <Tree>
                <TreeRow $pad={5} $bold>
                  <ArrowSlot><DownCaret /></ArrowSlot>
                  <TreeIcon><Star size={15} color="#d89c1c" fill="#d89c1c" /></TreeIcon>Favorites
                </TreeRow>
                {favorites.map(f => <TreeRow key={f} $pad={39}><SmallSearch />{f}</TreeRow>)}
                <TreeRow $pad={5} $mt={19} $bold>
                  <ArrowSlot><DownCaret /></ArrowSlot>
                  <TreeIcon><Folder open /></TreeIcon>Assets
                </TreeRow>
                {folders.map(f => <TreeRow key={f} $pad={40} $gap={5} $on={f === "Scenes"}><Folder />{f}</TreeRow>)}
                <TreeRow $pad={5} $bold>
                  <ArrowSlot><SideCaret /></ArrowSlot>
                  <TreeIcon><Folder /></TreeIcon>Packages
                </TreeRow>
              </Tree>
              <Browser>
                <Crumbs>
                  Assets
                  <svg width="7" height="11" viewBox="0 0 7 11" fill="none" stroke="#777" strokeWidth="1.200"><path d="M1 .5l5 5-5 5" /></svg>
                  <CrumbBold>Scenes</CrumbBold>
                </Crumbs>
                <AssetGrid>
                  {scenes.map(s => (
                    <AssetCell key={s} $on={s === "Multilevel"}>
                      <AssetIcon><UnityLogo /></AssetIcon>
                      <AssetName $on={s === "Multilevel"}>{s}</AssetName>
                    </AssetCell>
                  ))}
                </AssetGrid>
                <ProjectFooter>
                  <UnityLogo size={15} color="#a8a8a8" />Assets/Scenes/Multilevel.unity
                  <FooterSlider><FooterKnob /></FooterSlider>
                </ProjectFooter>
              </Browser>
            </ProjectBody>
          </Panel>
        </LeftCol>

        <Panel>
          <TabBar>
            <Tab $on $w={119} $pad={10} $gap={6}><InfoDot />Inspector</Tab>
            <Tab $w={100} $pad={9}>Collaborate</Tab>
            <TabTools><Lock /><Dots /></TabTools>
          </TabBar>
          <InspectorHead>
            <InspectorLogo><UnityLogo size={30} /></InspectorLogo>
            <InspectorTitle>Multilevel (Scene Asset)</InspectorTitle>
            <HeadDots><Dots /></HeadDots>
            <OpenBtn>Open</OpenBtn>
          </InspectorHead>
          <InspectorFill />
          <LabelsHead>Asset Labels</LabelsHead>
          <LabelsBody>
            <TagPill><TagIcon color="#dfe6ee" hole="#1d3f6e" flip /></TagPill>
            <BundleRow>
              <BundleLabel>AssetBundle</BundleLabel>
              <Select $w={240}>None<Caret $c="#999" /></Select>
              <Select $w={81} $ml={8}>None<Caret $c="#999" /></Select>
            </BundleRow>
          </LabelsBody>
        </Panel>
      </Editor>

      <StatusBar>
        <Bubble />game over
        <StatusIcons>
          <StatusIcon><BugIcon /></StatusIcon>
          <StatusIcon><DbIcon /></StatusIcon>
          <StatusIcon><SyncOffIcon /></StatusIcon>
          <StatusIcon><CheckIcon /></StatusIcon>
        </StatusIcons>
      </StatusBar>

      <Taskbar>
        <SysSlot><WinLogo /></SysSlot>
        <SysSlot><SearchGlass /></SysSlot>
        <SysSlot><CortanaRing /></SysSlot>
        <SysSlot><TaskView /></SysSlot>
        <AppsGroup>
          {taskApps.map((a, i) => (
            <AppSlot key={i} $line={a.line} $orange={a.orange} $on={a.on} $wide={a.wide}>{a.icon}</AppSlot>
          ))}
        </AppsGroup>
        <Tray>
          <Weather>
            <WeatherIcon />
            <WeatherText><Temp>86°F</Temp><span>Rain showers</span></WeatherText>
          </Weather>
          <TrayIcons>
            <svg width="16" height="10" viewBox="0 0 16 10" fill="none" stroke="#111" strokeWidth="1.200"><path d="M1 9l7-8 7 8" /></svg>
            <TrayCloud />
            <MicIcon />
            <BatteryIcon />
            <WifiIcon />
            <VolumeIcon />
          </TrayIcons>
          <Clock>3:29 PM<br />11/25/2021</Clock>
          <Notify>
            <NotifyIcon />
            <NotifyBadge>4</NotifyBadge>
          </Notify>
        </Tray>
      </Taskbar>
    </Page>
  );
}
